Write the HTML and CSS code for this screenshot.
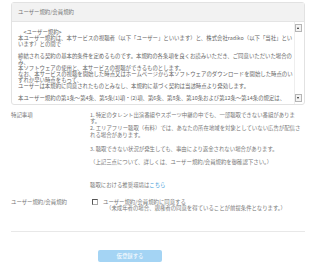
FILE: index.html
```html
<!DOCTYPE html>
<html lang="ja">
<head>
    <meta charset="UTF-8">
    <title>ユーザー規約/会員規約</title>
    <link rel="stylesheet" href="styles.css">
</head>
<body>
    <div class="page">
        <div class="terms">
            <div class="terms-head">ユーザー規約/会員規約</div>
            <div class="terms-body">
                <div class="terms-text">
                    <p>　&lt;ユーザー規約&gt;</p>
                    <p>本ユーザー規約は、本サービスの視聴者（以下「ユーザー」といいます）と、株式会社radiko（以下「当社」とい</p>
                    <p>います）との間で</p>
                    <p class="gap">締結される契約の基本的条件を定めるものです。本規約の各条項を良くお読みいただき、ご同意いただいた場合の</p>
                    <p>み、</p>
                    <p>本ソフトウェアの使用と、本サービスの視聴ができるものとします。</p>
                    <p>なお、本サービスの視聴を開始した時点又はホームページから本ソフトウェアのダウンロードを開始した時点のい</p>
                    <p>ずれか早い時点をもって、</p>
                    <p>ユーザーは本規約に同意されたものとみなし、本規約に基づく契約は当該時点より発効します。</p>
                    <p class="gap">本ユーザー規約の第1条～第4条、第5条(1)項・(2)項、第6条、第8条、第10条および第12条～第14条の規定は、</p>
                </div>
                <div class="scrollbar">
                    <span class="arrow up"></span>
                    <span class="arrow down"></span>
                </div>
            </div>
        </div>

        <div class="row notes">
            <div class="row-label">特記事項</div>
            <div class="row-body">
                <p class="note">1. 特定のタレント出演番組やスポーツ中継の中でも、一部聴取できない番組がありま<br>す。</p>
                <p class="note">2. エリアフリー聴取（有料）では、あなたの所在地域を対象としていない広告が配信さ<br>れる場合があります。</p>
                <p class="note spaced">3. 聴取できない状況が発生しても、事由により返金されない場合があります。</p>
                <p class="note spaced">（上記三点について、詳しくは、ユーザー規約/会員規約を御確認下さい。）</p>
                <p class="env">聴取における推奨環境は<a href="#">こちら</a></p>
            </div>
        </div>

        <div class="row agree">
            <div class="row-label">ユーザー規約/会員規約</div>
            <div class="row-body">
                <label class="check"><span class="box"></span>ユーザー規約/会員規約に同意する</label>
                <p class="minor">（未成年者の場合、親権者の同意を得ていることが前提条件となります。）</p>
            </div>
        </div>

        <hr class="divider">

        <div class="actions">
            <button class="submit" disabled>仮登録する</button>
        </div>
    </div>
</body>
</html>
```

FILE: styles.css
```css
body {
    margin: 0;
    background: #fff;
    color: #777;
    font-family: "Noto Sans CJK JP", "Noto Sans", sans-serif;
    font-size: 5.4px;
}

p {
    margin: 0;
}

.page {
    width: 294px;
    padding: 2px 0 0 11px;
}

.terms {
    border: 1px solid #e2e2e2;
    border-radius: 3px;
}

.terms-head {
    background: #f2f2f2;
    height: 18px;
    line-height: 18px;
    padding-left: 6px;
    border-bottom: 1px solid #e4e4e4;
}

.terms-body {
    display: flex;
    height: 82px;
}

.terms-text {
    flex: 1;
    padding: 7px 0 0 6px;
    white-space: nowrap;
    overflow: hidden;
    color: #666;
}

.terms-text p {
    height: 6px;
    line-height: 6px;
}

.terms-text .gap {
    margin-top: 6px;
}

.scrollbar {
    width: 8px;
    display: flex;
    flex-direction: column;
    justify-content: space-between;
    padding: 2px 1px 2px 0;
    border-left: 1px solid #eee;
}

.arrow {
    position: relative;
    width: 5px;
    height: 6px;
    border: 1px solid #b5b5b5;
    background: #f3f3f3;
}

.arrow::after {
    content: "";
    position: absolute;
    left: 1px;
    border-left: 1.5px solid transparent;
    border-right: 1.5px solid transparent;
}

.arrow.up::after {
    top: 2px;
    border-bottom: 2px solid #222;
}

.arrow.down::after {
    top: 2px;
    border-top: 2px solid #222;
}

.row {
    display: flex;
}

.row-label {
    width: 79px;
    flex: none;
}

.row-body {
    width: 224px;
    white-space: nowrap;
}

.notes {
    margin-top: 6.6px;
    line-height: 6.8px;
}

.note.spaced {
    margin-top: 6.8px;
}

.env {
    margin-top: 15.6px;
}

.env a {
    color: #3b9ad9;
    text-decoration: none;
}

.agree {
    margin-top: 10.4px;
    line-height: 6.4px;
}

.check {
    display: flex;
    align-items: center;
    margin-left: 2px;
}

.box {
    width: 4px;
    height: 4px;
    margin-right: 5px;
    border: 1px solid #aaa;
    border-top-color: #555;
    border-left-color: #555;
    background: #fff;
}

.minor {
    padding-left: 16px;
}

.divider {
    margin: 19.4px 0 0;
    border: none;
    border-top: 1px solid #e8e8e8;
}

.actions {
    padding: 18px 0 0 87px;
}

.submit {
    width: 64px;
    height: 12px;
    padding: 0;
    border: none;
    border-radius: 2px;
    background: #a4d4f4;
    color: #fff;
    font-family: inherit;
    font-size: 5.4px;
}
```
